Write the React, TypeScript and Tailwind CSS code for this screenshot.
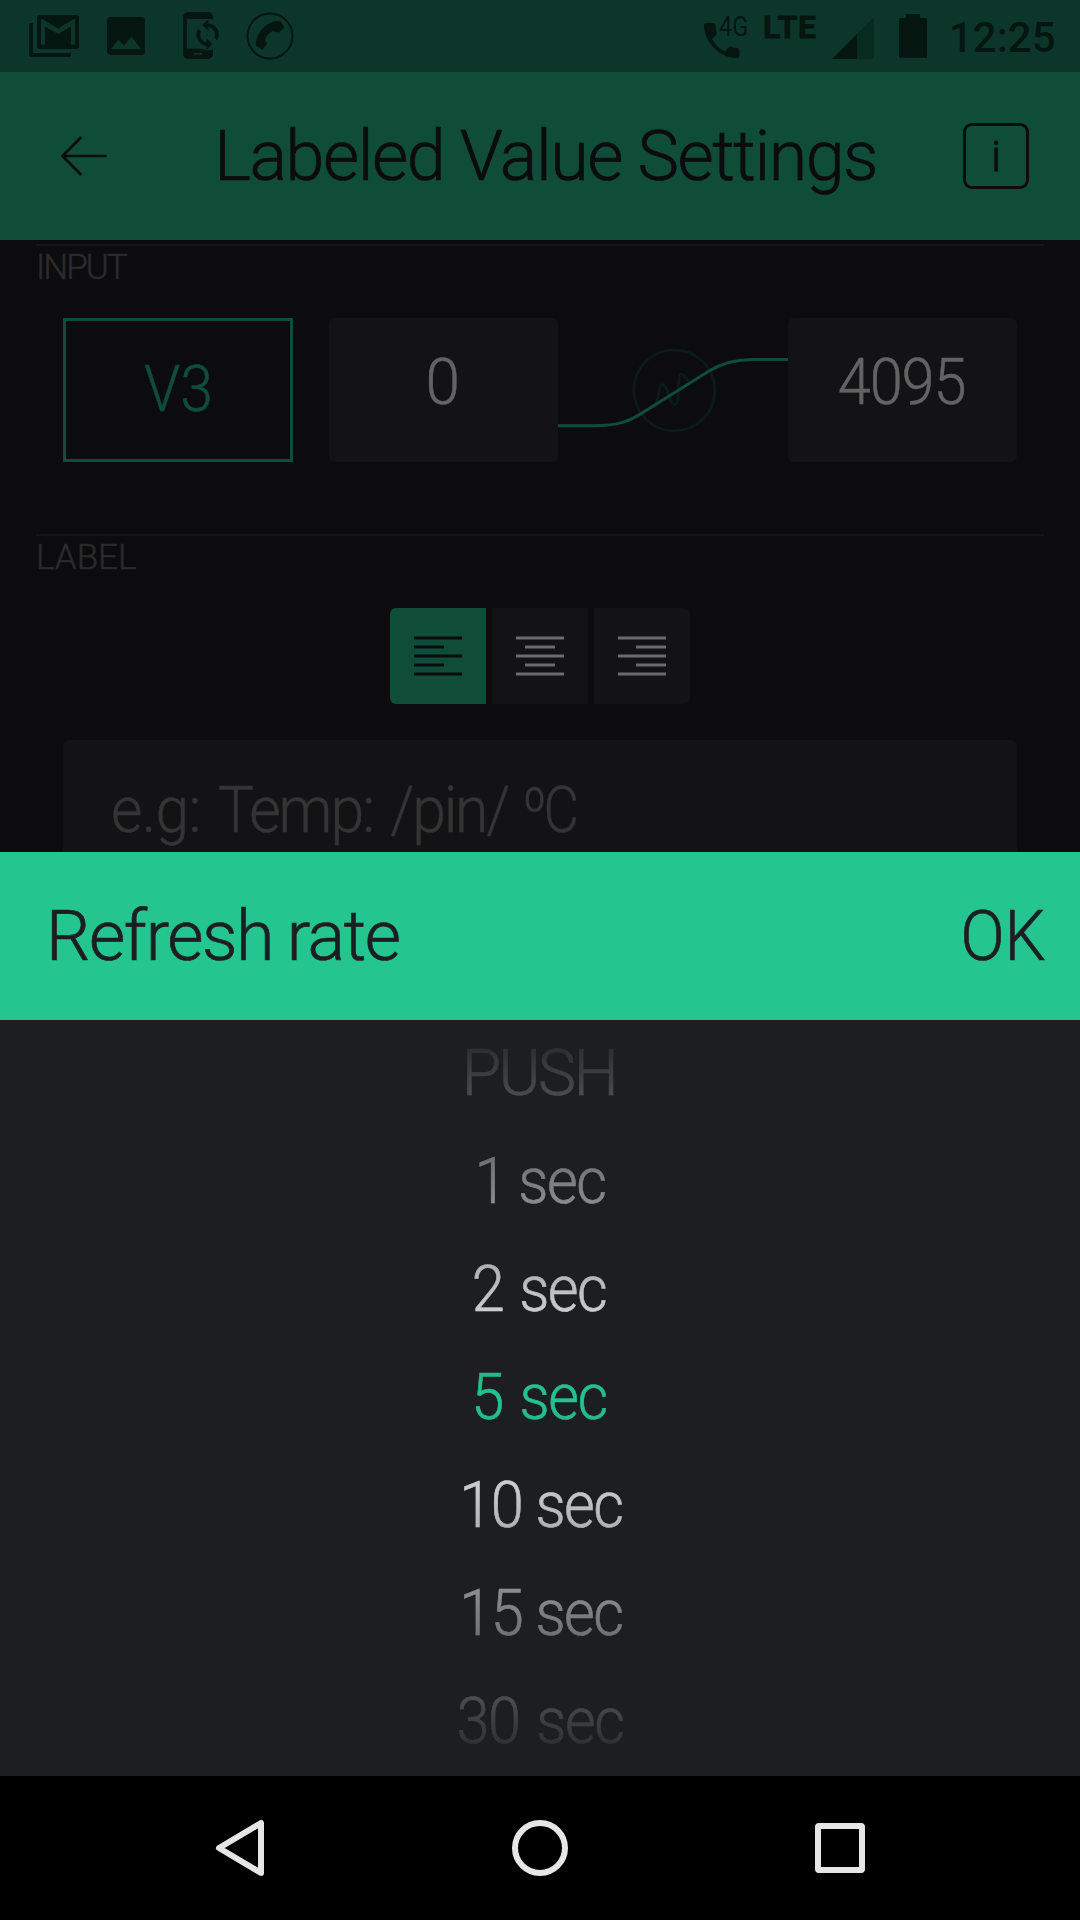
import type { ReactNode } from "react";
import clsx from "clsx";

const rates = [
  { label: "PUSH", cls: "tracking-[-2.6px] pr-[2px]" },
  { label: "1 sec", cls: "scale-x-[0.93] tracking-[-1.6px] [word-spacing:-1px]" },
  { label: "2 sec", cls: "scale-x-[0.93] tracking-[-1.6px] [word-spacing:3px] pr-[2px]" },
  { label: "5 sec", cls: "scale-x-[0.93] tracking-[-1.6px] [word-spacing:4px] pr-[2px]", selected: true },
  { label: "10 sec", cls: "scale-x-[0.93] tracking-[-1.6px] [word-spacing:0px] pl-[2px]" },
  { label: "15 sec", cls: "scale-x-[0.93] tracking-[-1.6px] [word-spacing:0px] pl-[2px]" },
  { label: "30 sec", cls: "scale-x-[0.93] tracking-[-1.6px] [word-spacing:4px]" },
];

function StatusBar() {
  return (
    <div className="flex h-[72px] items-start bg-[#0c3629] text-[#04160f]">
      <svg className="mt-[12px] ml-[27px]" width="54" height="48" viewBox="27 12 54 48" fill="currentColor">
        <path d="M29 23h4v30h38v4H32a3 3 0 0 1-3-3z" />
        <path fillRule="evenodd" d="M40 15h36a3 3 0 0 1 3 3v28a3 3 0 0 1-3 3H40a3 3 0 0 1-3-3V18a3 3 0 0 1 3-3zM41 19v25.500h4V26.500l13 7.500 13-7.500v18h4V19h-1L58 28.500 42 19z" />
      </svg>
      <svg className="mt-[17px] ml-[26px]" width="38" height="38" viewBox="0 0 38 38" fill="currentColor">
        <path fillRule="evenodd" d="M4 0h30a4 4 0 0 1 4 4v30a4 4 0 0 1-4 4H4a4 4 0 0 1-4-4V4a4 4 0 0 1 4-4zM4 32h30L24.500 19.500l-7.500 9-5.500-6z" />
      </svg>
      <svg className="mt-[12px] ml-[38px]" width="37" height="48" viewBox="183 12 37 48" fill="currentColor">
        <path d="M188 12h20a5 5 0 0 1 5 5v2.500l-3-.5H187v29.500h13l8 2 5-1V54a5 5 0 0 1-5 5h-20a5 5 0 0 1-5-5V17a5 5 0 0 1 5-5z" />
        <path d="M194 53h8v1.800h-8z" fill="#0c3629" />
        <path d="M202 25l6.500-5.500v4a11 11 0 0 1 8.500 17l-2.700-2.700a7.500 7.500 0 0 0-5.800-10.600v3.500z" />
        <path d="M212.500 44l-6 6v-4.200a11 11 0 0 1-8.200-17l2.700 2.700a7.500 7.500 0 0 0 5.500 10.800V38z" />
      </svg>
      <svg className="mt-[12px] ml-[26px]" width="48" height="48" viewBox="246 12 48 48" fill="currentColor">
        <circle cx="270" cy="36" r="22.500" fill="none" stroke="currentColor" strokeWidth="1.900" />
        <path d="M262.500 50L256 45.500C255 38 262 23.500 276.500 21L280.500 21.500L284.500 27.500L279 32.500L272.500 31.200C268.500 33 265.500 37.500 264.800 41L267.300 43.500Z" />
      </svg>

      <svg className="mt-[22px] ml-[409px]" width="38" height="38" viewBox="703 22 38 38" fill="currentColor">
        <path d="M706 23h7.500a2 2 0 0 1 2 2q.1 4 1.200 8-.2 1-.7 1.800l-4 4.300a30 30 0 0 0 12.500 12.500l4.300-4.200q1-.9 2-.7 4 1.300 6.600 1.300a2 2 0 0 1 2 2v6a2 2 0 0 1-2 2C719 58 704 42 704 25a2 2 0 0 1 2-2z" />
      </svg>
      <div className="-ml-[22px] w-[30px] origin-left scale-x-[0.87] text-[27px] leading-[54px]">4G</div>
      <div className="ml-[14px] w-[54px] text-[32px] font-bold leading-[54px] tracking-[0.7px] [-webkit-text-stroke:0.8px]">LTE</div>
      <svg className="mt-[17px] ml-[15px]" width="42" height="42" viewBox="0 0 42 42" fill="currentColor">
        <path d="M0 42L42 0v42z" opacity="0.35" />
        <path d="M0 42L25 17v25z" />
      </svg>
      <svg className="mt-[14px] ml-[25px]" width="28" height="44" viewBox="0 0 28 44" fill="currentColor">
        <path d="M7 0h14v4h5.500q1.500 0 1.500 1.500V42.500q0 1.300-1.500 1.300h-25Q0 43.800 0 42.500v-37Q0 4 1.500 4H7z" />
      </svg>
      <div className="ml-[22px] text-[42px] font-medium leading-[75px]">12:25</div>
    </div>
  );
}

function Header() {
  return (
    <div className="flex h-[168px] items-center bg-[#0f4d38] text-[#0c0c0e]">
      <svg className="ml-[60px]" width="48" height="40" viewBox="0 0 48 40" fill="none" stroke="currentColor" strokeWidth="2.700" strokeLinecap="round" strokeLinejoin="round">
        <path d="M45.500 20H2.500M20.500 1.700L2.500 20l18 18.300" />
      </svg>
      <h1 className="ml-[106px] w-[700px] whitespace-nowrap text-[70px] font-light leading-[80px] tracking-[-1.46px] [-webkit-text-stroke:0.7px]">
        Labeled Value Settings
      </h1>
      <div className="ml-[49px] flex h-[66px] w-[66px] items-center justify-center rounded-[9px] border-[3px] border-current text-[43px] font-light leading-[60px] [-webkit-text-stroke:1px]">
        <span>i</span>
      </div>
    </div>
  );
}

function SectionTitle({ children, className }: { children: ReactNode; className: string }) {
  return (
    <div className={clsx("mx-[36px] h-[42px] border-t-2 border-[#151618] text-[35px] font-light leading-[44px] text-[#2a2b2c]", className)}>
      {children}
    </div>
  );
}

function AlignIcon({ short }: { short: number }) {
  return (
    <svg width="48" height="40" viewBox="0 0 48 40" stroke="currentColor" strokeWidth="3">
      <path d={`M0 2H48M${short} 11h30M0 20H48M${short} 29h30M0 38H48`} />
    </svg>
  );
}

function Settings() {
  return (
    <div className="h-[612px] overflow-hidden bg-[#0c0c0e] pt-[4px] [-webkit-text-stroke:0.5px]">
      <SectionTitle className="tracking-[-2px]">INPUT</SectionTitle>
      <div className="mt-[32px] ml-[63px] flex h-[144px] text-[64px] font-light text-[#636363]">
        <div className="w-[230px] border-[3px] border-[#0f4d38] text-center leading-[138px] text-[#0f4d38]">
          <span className="inline-block scale-x-[0.92]">V3</span>
        </div>
        <div className="ml-[36px] w-[229px] rounded-[6px] bg-[#131315] pr-[2px] text-center leading-[130px]">
          <span className="inline-block scale-x-[0.97]">0</span>
        </div>
        <svg width="230" height="144" viewBox="558 318 230 144" fill="none">
          <g stroke="#0c1b18" strokeWidth="2.700">
            <circle cx="674.300" cy="390.300" r="40.500" />
            <path d="M653 408C660 404 657 384.500 662.500 384.500C668 384.500 669 404.500 675 404.500C681 404.500 676 374 681.500 374C684 374 685 379 689 381" />
          </g>
          <path d="M558 425.700H594C618 425.700 630 421 642 413L709 371C722 363 735 359.500 753 359.500H788" stroke="#0f4d38" strokeWidth="3" />
        </svg>
        <div className="w-[229px] rounded-[6px] bg-[#131315] pr-[1px] text-center leading-[130px]">
          <span className="inline-block scale-x-[0.93] tracking-[-1.2px]">4095</span>
        </div>
      </div>
      <SectionTitle className="mt-[72px] tracking-[0px]">LABEL</SectionTitle>
      <div className="mt-[32px] flex h-[96px] justify-center gap-[6px] text-[#6b6b6b]">
        <div className="flex w-[96px] items-center justify-center rounded-l-[6px] bg-[#0f4d38] text-[#0a0b0c]"><AlignIcon short={0} /></div>
        <div className="flex w-[96px] items-center justify-center bg-[#131315]"><AlignIcon short={9} /></div>
        <div className="flex w-[96px] items-center justify-center rounded-r-[6px] bg-[#131315]"><AlignIcon short={18} /></div>
      </div>
      <div className="mx-[63px] mt-[36px] h-[144px] rounded-[6px] bg-[#131315] pl-[48px] text-[64px] font-light leading-[142px] tracking-[-2.4px] text-[#333433] [word-spacing:5px]">
        <div className="origin-left scale-x-[0.95] whitespace-nowrap">
          <span className="tracking-[-0.8px]">e.g:</span> <span className="tracking-[-2.1px]">Temp:</span> /pin/{" "}
          <span className="-ml-[3px] inline-block origin-left scale-x-[0.9] tracking-[-4px]">ºC</span>
        </div>
      </div>
    </div>
  );
}

function RatePicker() {
  return (
    <div>
      <div className="flex h-[168px] items-center justify-between bg-[#24c58e] pr-[34px] pl-[46px] text-[70px] font-light leading-[80px] text-[#1d1e22] [-webkit-text-stroke:0.7px]">
        <span className="tracking-[-1.4px] [word-spacing:-2px]">Refresh rate</span>
        <span className="origin-right scale-x-[0.93]">OK</span>
      </div>
      <div className="h-[756px] bg-[#1d1e22]">
        <ul className="text-center text-[64px] font-light leading-[108px] text-white [mask-image:linear-gradient(to_bottom,transparent,black_50%,transparent)] [-webkit-text-stroke:0.6px]">
          {rates.map((r) => (
            <li key={r.label} className={clsx("h-[108px]", r.cls, r.selected && "text-[#24c58e]")}>{r.label}</li>
          ))}
        </ul>
      </div>
    </div>
  );
}

function NavBar() {
  return (
    <div className="flex h-[144px] items-center bg-black text-[#e6e6e6]">
      <svg className="ml-[214px]" width="52" height="60" viewBox="0 0 52 60" fill="none" stroke="currentColor" strokeWidth="6" strokeLinejoin="round">
        <path d="M47 5V55L5 30z" />
      </svg>
      <div className="ml-[246px] h-[56px] w-[56px] rounded-full border-[6px] border-current" />
      <div className="ml-[247px] h-[50px] w-[50px] rounded-[4px] border-[6px] border-current" />
    </div>
  );
}

export default function App() {
  return (
    <div className="flex h-[1920px] w-[1080px] flex-col overflow-hidden bg-black font-['Roboto',sans-serif]">
      <StatusBar />
      <Header />
      <Settings />
      <RatePicker />
      <NavBar />
    </div>
  );
}
